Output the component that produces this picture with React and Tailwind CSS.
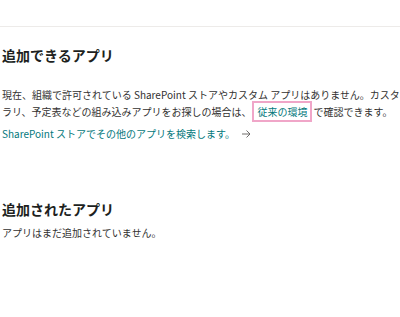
export default function App() {
  const font = { fontFamily: '"Noto Sans CJK JP", "Noto Sans", sans-serif' };
  return (
    <div className="w-[400px] h-[317px] bg-white overflow-hidden text-[#323130]" style={font}>
      {/* Top bar */}
      <div className="h-[27px] border-b border-[#edebe9]" />

      <div className="px-[2px]">
        {/* Available apps */}
        <h2 className="mt-[18px] text-[14px] leading-[20px] font-semibold text-[#201f1e] whitespace-nowrap">
          追加できるアプリ
        </h2>
        <div className="mt-[21px] text-[10px] leading-[17px] whitespace-nowrap">
          <div>現在、組織で許可されている SharePoint ストアやカスタム アプリはありません。カスタ</div>
          <div className="flex items-center h-[17px]">
            <span>ラリ、予定表などの組み込みアプリをお探しの場合は、</span>
            <span className="mx-[1px] px-[3px] h-[21px] flex items-center border-2 border-[#f0a6c8] text-[#03787c]">
              従来の環境
            </span>
            <span>で確認できます。</span>
          </div>
        </div>
        <a className="mt-[5px] flex items-center gap-[6px] text-[10px] leading-[17px] text-[#03787c] whitespace-nowrap">
          <span>SharePoint ストアでその他のアプリを検索します。</span>
          <svg width="10" height="10" viewBox="0 0 10 10" fill="none" stroke="#605e5c" strokeWidth="0.9">
            <path d="M1 5h8M5.5 1.5 9 5 5.5 8.5" />
          </svg>
        </a>

        {/* Added apps */}
        <h2 className="mt-[57px] text-[14px] leading-[20px] font-semibold text-[#201f1e] whitespace-nowrap">
          追加されたアプリ
        </h2>
        <p className="mt-[5px] text-[10px] leading-[17px] whitespace-nowrap">アプリはまだ追加されていません。</p>
      </div>
    </div>
  );
}
